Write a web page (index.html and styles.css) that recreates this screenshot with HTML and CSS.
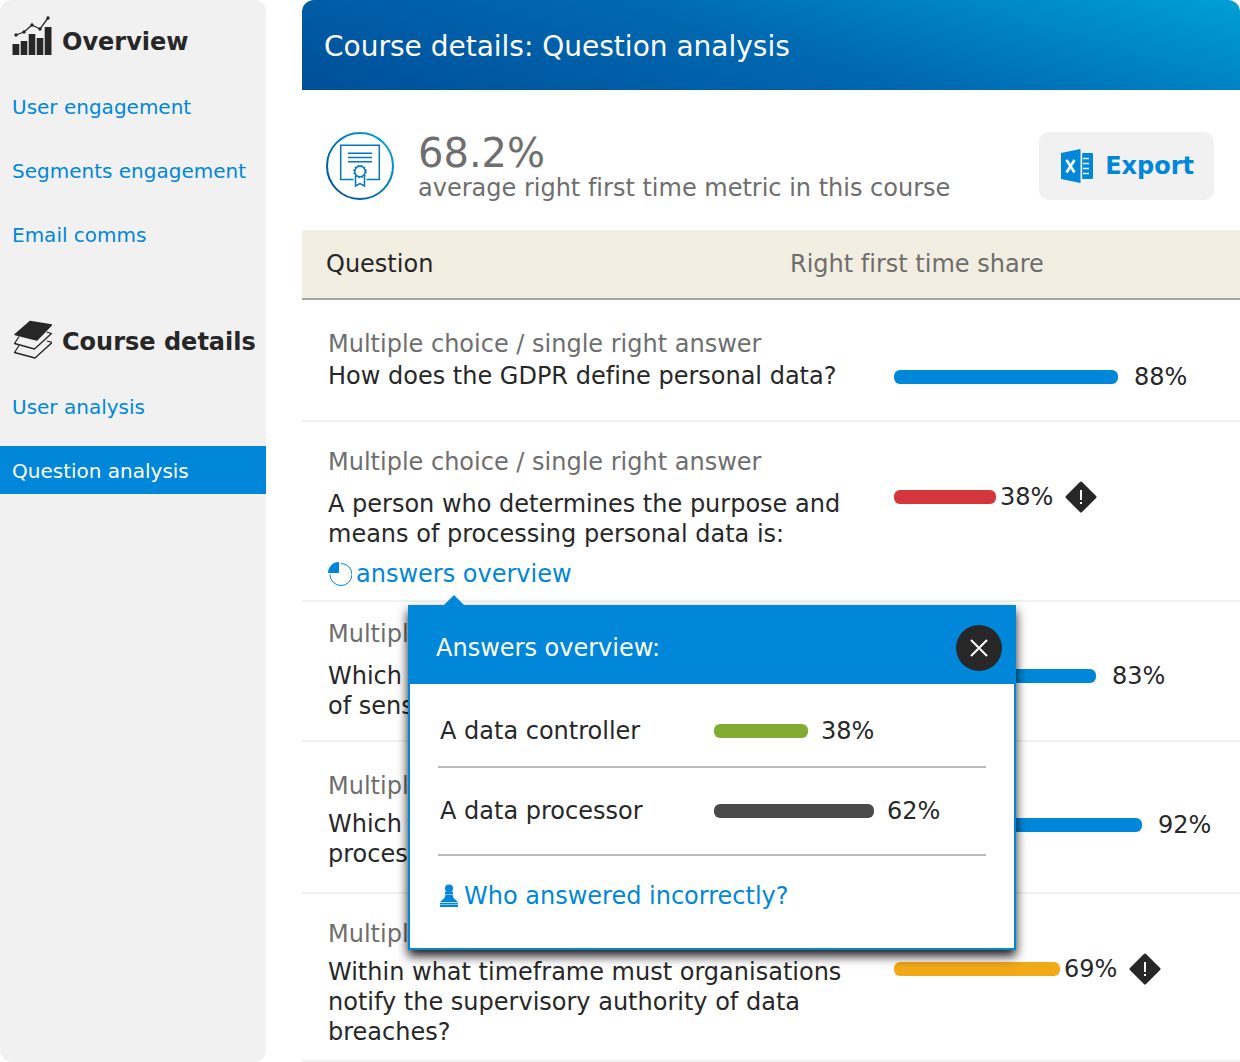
FILE: index.html
```html
<!DOCTYPE html>
<html lang="en">

<head>
    <meta charset="UTF-8">
    <meta name="viewport" content="width=device-width, initial-scale=1">
    <title>Question analysis</title>
    <link rel="stylesheet" href="styles.css">
</head>

<body>
    <nav class="sidebar">
        <section class="menu">
            <h2>
                <svg width="40" height="44" viewBox="0 0 40 44" fill="#272727">
                    <path d="M.5 28h6.800v11H.5zM8.700 25h6.600v14H8.700zM16.700 18h6.600v21h-6.600zM24.700 22h6.600v17h-6.600zM32.700 11h6.800v28h-6.800z" />
                    <path d="M4 19l8-3 8-7 8 4 8-11" fill="none" stroke="#272727" stroke-width="1.300" />
                    <circle cx="4" cy="19" r="1.700" />
                    <circle cx="12" cy="16" r="1.700" />
                    <circle cx="20" cy="9" r="1.700" />
                    <circle cx="28" cy="13" r="1.700" />
                    <circle cx="36" cy="2" r="1.700" />
                </svg>
                Overview
            </h2>
            <ul>
                <li><a href="#">User engagement</a></li>
                <li><a href="#">Segments engagement</a></li>
                <li><a href="#">Email comms</a></li>
            </ul>
        </section>
        <section class="menu">
            <h2>
                <svg width="40" height="44" viewBox="0 0 40 44" fill="none" stroke="#272727" stroke-width="1.300" stroke-linejoin="round">
                    <path d="M18 5.500l21.500 3.500-14.500 15-22-5.500z" fill="#272727" />
                    <path d="M7 20.500l-4.500 7L22.500 33l17-15.500-5-1.500" />
                    <path d="M7 29.500l-4.500 7L23 42l17-15.500-5-1.500" />
                </svg>
                Course details
            </h2>
            <ul>
                <li><a href="#">User analysis</a></li>
                <li><a href="#" class="active">Question analysis</a></li>
            </ul>
        </section>
    </nav>

    <main>
        <header class="banner">
            <h1>Course details: Question analysis</h1>
        </header>

        <section class="summary">
            <svg width="68" height="68" viewBox="0 0 68 68" fill="none" stroke="url(#ring)" stroke-width="2">
                <defs>
                    <linearGradient id="ring" gradientUnits="userSpaceOnUse" x1="8" y1="60" x2="60" y2="8">
                        <stop offset="0" stop-color="#00539f" />
                        <stop offset="1" stop-color="#009fd6" />
                    </linearGradient>
                </defs>
                <circle cx="34" cy="34" r="33" />
                <g stroke="#0077c0" stroke-width="1.500">
                    <path d="M27.500 47.500H14.700V13.300h38.600v34.200H40.500" />
                    <path d="M22 21.200h24M22 25.500h24M22 29.700h24" />
                    <circle cx="34" cy="39.500" r="5.200" />
                    <circle cx="34" cy="39.500" r="6" stroke-dasharray="1.600 1.540" />
                    <path d="M29.500 44v10l4.500-2.500 4.500 2.500V44" />
                </g>
            </svg>
            <div class="metric">
                <strong>68.2%</strong>
                <p>average right first time metric in this course</p>
            </div>
            <button class="export" type="button">
                <svg width="32" height="34" viewBox="0 0 32 34">
                    <path d="M20 4h11q1 0 1 1v24q0 1-1 1H20z" fill="#0087d9" />
                    <path d="M20.500 4v26M22 9.500h6M22 14.500h6M22 19.500h6M22 24.500h6" stroke="#f1f1f1" stroke-width="1.400" />
                    <path d="M0 4l19.500-4v34L0 30z" fill="#0087d9" />
                    <path d="M5.500 11l8 12.500M13.500 11l-8 12.500" stroke="#fff" stroke-width="2.600" />
                </svg>
                Export
            </button>
        </section>

        <table class="questions">
            <colgroup>
                <col class="col-question">
                <col class="col-gap">
                <col>
            </colgroup>
            <thead>
                <tr>
                    <th scope="col">Question</th>
                    <th scope="col" colspan="2" class="share">Right first time share</th>
                </tr>
            </thead>
            <tbody>
                <tr class="short">
                    <td colspan="2">
                        <p class="type">Multiple choice / single right answer</p>
                        <p>How does the GDPR define personal data?</p>
                    </td>
                    <td>
                        <div class="score"><span class="bar" style="width: 224px"></span>88%</div>
                    </td>
                </tr>
                <tr class="open">
                    <td colspan="2">
                        <p class="type">Multiple choice / single right answer</p>
                        <p>A person who determines the purpose and<br>means of processing personal data is:</p>
                        <div class="answers">
                            <a href="#answers">
                                <svg width="24" height="24" viewBox="0 0 24 24">
                                    <path d="M13 1.500a11 11 0 1 1-11 11" fill="none" stroke="#0087d9" />
                                    <path d="M11 0v11H0A11 11 0 0 1 11 0z" fill="#0087d9" />
                                </svg>
                                answers overview
                            </a>
                            <div class="popup" id="answers">
                                <div class="popup-head">
                                    <h3>Answers overview:</h3>
                                    <button class="close" type="button" aria-label="Close">
                                        <svg width="18" height="18" viewBox="0 0 18 18">
                                            <path d="M1 1l16 16M17 1L1 17" stroke="#fff" stroke-width="2" />
                                        </svg>
                                    </button>
                                </div>
                                <ul>
                                    <li>
                                        <span class="option">A data controller</span>
                                        <span class="bar green" style="width: 94px"></span>38%
                                    </li>
                                    <li>
                                        <span class="option">A data processor</span>
                                        <span class="bar dark" style="width: 160px"></span>62%
                                    </li>
                                </ul>
                                <a href="#" class="who">
                                    <svg width="18" height="24" viewBox="0 0 18 24" fill="#0087d9">
                                        <circle cx="9" cy="4.500" r="4" />
                                        <path d="M5 8h8v2.500H5zM5.500 11h7l1 3 4.500 4H0l4.500-4zM0 18.700h18v1.700H0zM0 21h18v2H0z" />
                                    </svg>
                                    Who answered incorrectly?
                                </a>
                            </div>
                        </div>
                    </td>
                    <td>
                        <div class="score alert">
                            <span class="bar red" style="width: 102px"></span>38%
                            <svg width="32" height="32" viewBox="0 0 32 32">
                                <path d="M16 2l14 14-14 14L2 16z" fill="#272727" stroke="#272727" stroke-width="3" stroke-linejoin="round" />
                                <path d="M16 9v10M16 21v2" stroke="#fff" stroke-width="2" />
                            </svg>
                        </div>
                    </td>
                </tr>
                <tr class="high">
                    <td colspan="2">
                        <p class="type">Multiple choice / single right answer</p>
                        <p>Which of these are examples<br>of sensitive personal data?</p>
                    </td>
                    <td>
                        <div class="score"><span class="bar" style="width: 202px"></span>83%</div>
                    </td>
                </tr>
                <tr class="low">
                    <td colspan="2">
                        <p class="type">Multiple choice / single right answer</p>
                        <p>Which of these are lawful bases for<br>processing personal data?</p>
                    </td>
                    <td>
                        <div class="score"><span class="bar" style="width: 248px"></span>92%</div>
                    </td>
                </tr>
                <tr>
                    <td colspan="2">
                        <p class="type">Multiple choice / single right answer</p>
                        <p>Within what timeframe must organisations<br>notify the supervisory authority of data<br>breaches?</p>
                    </td>
                    <td>
                        <div class="score alert">
                            <span class="bar orange" style="width: 166px"></span>69%
                            <svg width="32" height="32" viewBox="0 0 32 32">
                                <path d="M16 2l14 14-14 14L2 16z" fill="#272727" stroke="#272727" stroke-width="3" stroke-linejoin="round" />
                                <path d="M16 9v10M16 21v2" stroke="#fff" stroke-width="2" />
                            </svg>
                        </div>
                    </td>
                </tr>
            </tbody>
        </table>
    </main>
</body>

</html>
```

FILE: styles.css
```css
* {
    box-sizing: border-box;
}

body {
    margin: 0;
    display: flex;
    gap: 36px;
    min-height: 100vh;
    font-family: Verdana, "DejaVu Sans", sans-serif;
    font-size: 24px;
    font-variant-ligatures: none;
    line-height: 30px;
    color: #272727;
    background-color: #fff;
}

h1,
h2,
h3,
p,
ul {
    margin: 0;
    padding: 0;
}

ul {
    list-style: none;
}

a {
    color: #0087d9;
    text-decoration: none;
}

svg {
    flex: none;
}

button {
    border: none;
    font: inherit;
    cursor: pointer;
}

/* sidebar */

.sidebar {
    flex: 0 0 266px;
    background-color: #f1f1f1;
    border-radius: 12px;
}

.menu {
    margin-bottom: 42px;
}

.menu h2 {
    display: flex;
    align-items: flex-end;
    gap: 10px;
    height: 82px;
    padding: 0 0 22px 12px;
    font-size: 24px;
    line-height: 36px;
    white-space: nowrap;
}

.menu ul {
    display: flex;
    flex-direction: column;
    gap: 16px;
}

.menu a {
    display: block;
    padding: 2px 12px 0;
    font-size: 20px;
    line-height: 46px;
    white-space: nowrap;
}

.menu a.active {
    color: #fff;
    background-color: #0087d9;
}

/* top */

main {
    flex: 1;
    min-width: 0;
}

.banner {
    padding: 32px 22px 28px;
    color: #fff;
    background: linear-gradient(16deg, #004f9a, #0068b0 50%, #009fd6);
    border-radius: 12px 12px 0 0;
}

.banner h1 {
    font-size: 28px;
    font-weight: normal;
    line-height: 30px;
}

.summary {
    display: flex;
    align-items: center;
    gap: 24px;
    padding: 39px 26px 27px 24px;
    color: #6e6e6e;
}

.metric {
    flex: 1;
    padding-top: 4px;
}

.metric strong {
    display: block;
    font-size: 40px;
    font-weight: normal;
    line-height: 40px;
}

.export {
    display: flex;
    align-items: center;
    gap: 12px;
    height: 68px;
    padding: 0 20px 0 22px;
    font-weight: bold;
    color: #0087d9;
    background-color: #f1f1f1;
    border-radius: 10px;
}

/* table */

.questions {
    width: 100%;
    table-layout: fixed;
    border-collapse: separate;
    border-spacing: 0;
}

.col-question {
    width: 488px;
}

.col-gap {
    width: 104px;
}

.questions th {
    padding: 19px 0 19px 24px;
    font-weight: normal;
    text-align: left;
    background-color: #f2eee1;
    border-bottom: 2px solid #a5a5a0;
}

.questions th.share {
    padding-left: 0;
    color: #6e6e6e;
}

.questions td {
    padding: 25px 0 13px 26px;
    vertical-align: top;
    border-bottom: 2px solid #f1f1f1;
}

.questions td:last-child {
    padding: 59px 0 0;
}

.questions .type {
    margin-bottom: 8px;
    color: #6e6e6e;
}

.questions .short td:first-child {
    padding: 29px 0 29px 26px;
}

.questions .short td:last-child {
    padding-top: 62px;
}

.questions .short .type {
    margin-bottom: 2px;
}

.questions .open td:first-child {
    padding-bottom: 11px;
}

.questions .open .type,
.questions .high .type {
    margin-bottom: 12px;
}

.questions .high td:first-child {
    padding: 17px 0 19px 26px;
}

.questions .low td:first-child {
    padding: 29px 0 23px 26px;
}

.questions .low td:last-child {
    padding-top: 68px;
}

.score {
    display: flex;
    align-items: center;
    gap: 16px;
}

.alert {
    gap: 4px;
}

.alert svg {
    margin: 0 8px;
}

.bar {
    flex: none;
    height: 14px;
    background-color: #0087d9;
    border-radius: 6px;
}

.red {
    background-color: #d3373b;
}

.orange {
    background-color: #f2a918;
}

.green {
    background-color: #82ac31;
}

.dark {
    background-color: #4a4a4a;
}

/* answers popup */

.answers {
    position: relative;
    margin-top: 10px;
}

.answers > a {
    display: inline-flex;
    align-items: center;
    gap: 4px;
    vertical-align: top;
}

.popup {
    position: absolute;
    z-index: 1;
    top: 46px;
    left: 80px;
    width: 608px;
    background-color: #fff;
    border: 2px solid #0087d9;
    box-shadow: 0 6px 10px rgba(0, 0, 0, .9);
}

.popup::before {
    content: "";
    position: absolute;
    top: -12px;
    left: 34px;
    border: 10px solid transparent;
    border-top: none;
    border-bottom-color: #0087d9;
}

.popup-head {
    display: flex;
    align-items: center;
    justify-content: space-between;
    height: 77px;
    padding: 4px 12px 0 26px;
    color: #fff;
    background-color: #0087d9;
}

.popup-head h3 {
    font-size: 24px;
    font-weight: normal;
}

.close {
    display: flex;
    align-items: center;
    justify-content: center;
    width: 46px;
    height: 46px;
    padding: 0;
    background-color: #272727;
    border-radius: 50%;
}

.popup ul {
    padding: 12px 28px 0;
}

.popup li {
    display: flex;
    align-items: center;
    gap: 13px;
    height: 88px;
    padding-left: 2px;
    border-bottom: 2px solid #bbb;
}

.popup li:first-child {
    height: 72px;
}

.option {
    width: 261px;
}

.who {
    display: flex;
    align-items: center;
    gap: 6px;
    padding: 25px 30px 37px;
}
```
